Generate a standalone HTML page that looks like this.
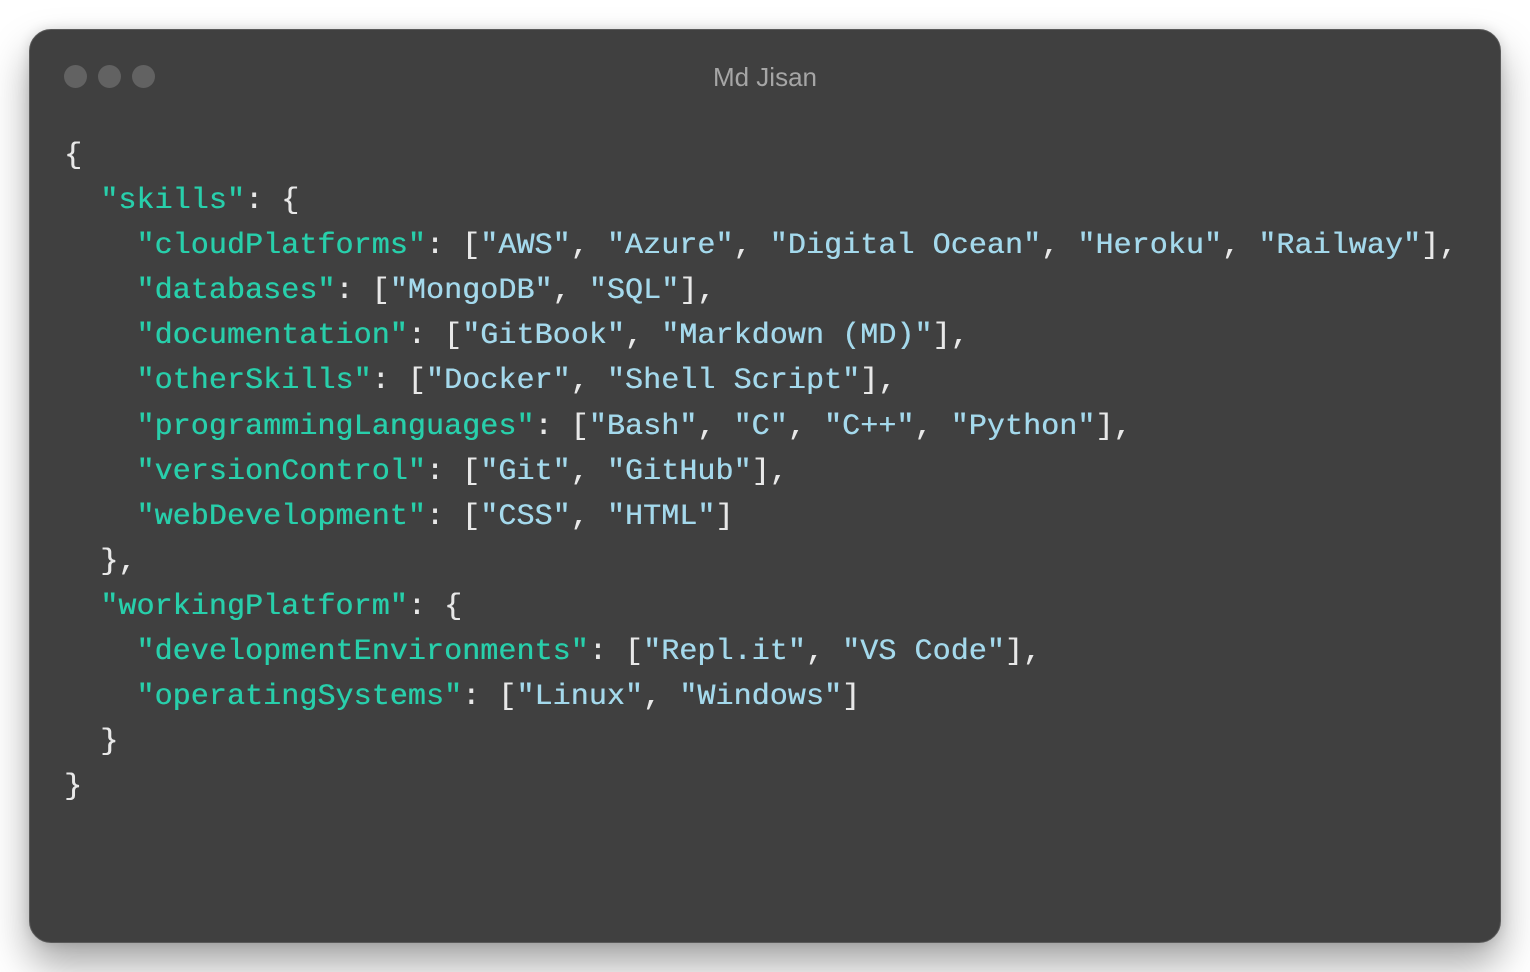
<!DOCTYPE html>
<html><head><meta charset="utf-8"><style>
html,body{margin:0;padding:0;background:#fff;width:1530px;height:972px;overflow:hidden}
.win{position:absolute;left:29px;top:29px;width:1470px;height:912px;background:#404040;border:1px solid #5a5a5a;border-radius:22px;box-shadow:0 22px 40px rgba(0,0,0,0.35),0 0 12px rgba(0,0,0,0.12)}
.dot{position:absolute;top:35px;width:23px;height:23px;border-radius:50%;background:#626262}
.title{position:absolute;left:0;right:0;top:32px;text-align:center;color:#a6a6a6;font:26px "Liberation Sans",sans-serif}
pre{position:absolute;left:34px;top:104px;margin:0;font:30px/45.1px "Liberation Mono",monospace;letter-spacing:0.09px;color:#e8e8e8;text-shadow:0.4px 0 0 currentColor}
.k{color:#28cfab}.v{color:#a4d9ec}
</style></head><body>
<div class="win">
<div class="dot" style="left:34px"></div><div class="dot" style="left:68px"></div><div class="dot" style="left:102px"></div>
<div class="title">Md Jisan</div>
<pre>{
  <span class="k">"skills"</span>: {
    <span class="k">"cloudPlatforms"</span>: [<span class="v">"AWS"</span>, <span class="v">"Azure"</span>, <span class="v">"Digital Ocean"</span>, <span class="v">"Heroku"</span>, <span class="v">"Railway"</span>],
    <span class="k">"databases"</span>: [<span class="v">"MongoDB"</span>, <span class="v">"SQL"</span>],
    <span class="k">"documentation"</span>: [<span class="v">"GitBook"</span>, <span class="v">"Markdown (MD)"</span>],
    <span class="k">"otherSkills"</span>: [<span class="v">"Docker"</span>, <span class="v">"Shell Script"</span>],
    <span class="k">"programmingLanguages"</span>: [<span class="v">"Bash"</span>, <span class="v">"C"</span>, <span class="v">"C++"</span>, <span class="v">"Python"</span>],
    <span class="k">"versionControl"</span>: [<span class="v">"Git"</span>, <span class="v">"GitHub"</span>],
    <span class="k">"webDevelopment"</span>: [<span class="v">"CSS"</span>, <span class="v">"HTML"</span>]
  },
  <span class="k">"workingPlatform"</span>: {
    <span class="k">"developmentEnvironments"</span>: [<span class="v">"Repl.it"</span>, <span class="v">"VS Code"</span>],
    <span class="k">"operatingSystems"</span>: [<span class="v">"Linux"</span>, <span class="v">"Windows"</span>]
  }
}</pre>
</div>
</body></html>
